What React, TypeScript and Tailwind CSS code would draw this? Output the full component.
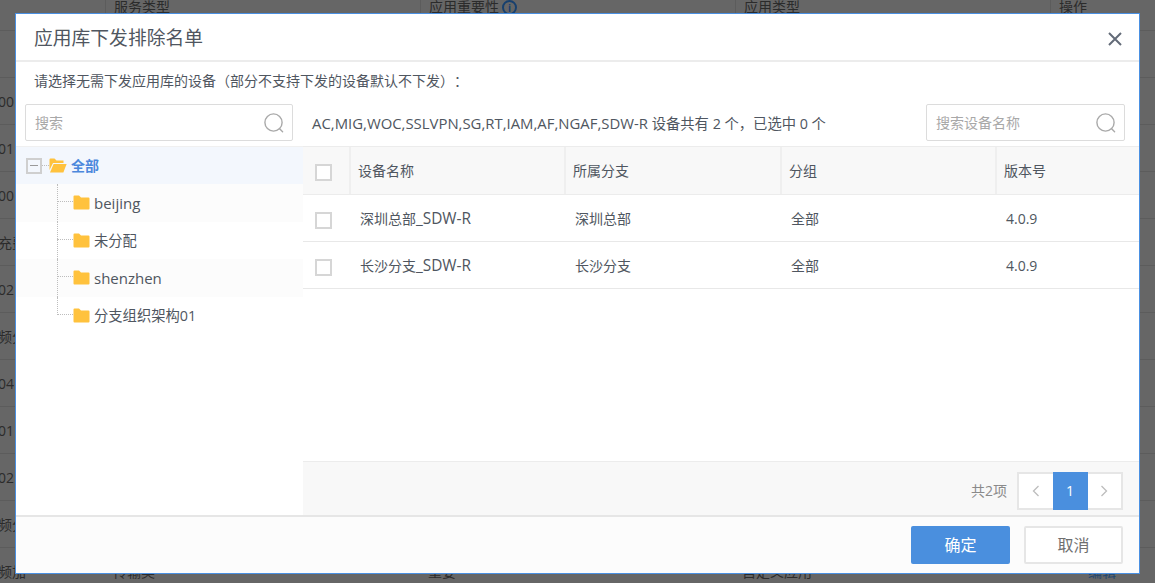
import React from "react";

const FONT = "[font-family:'Open_Sans','Noto_Sans_CJK_SC',sans-serif] [text-spacing-trim:space-all]";

function Search() {
  return (
    <svg width="22" height="22" viewBox="0 0 22 22" fill="none" stroke="#a9a9a9" strokeWidth="1.4" className="shrink-0">
      <circle cx="10.5" cy="10.5" r="8.6" />
      <path d="M16.6 16.8 L19.6 19.8" strokeLinecap="round" />
    </svg>
  );
}

function Folder() {
  return (
    <svg width="17" height="15" viewBox="0 0 17 15" className="shrink-0">
      <path d="M0.5 1.5 Q0.5 0.5 1.5 0.5 H6 L8 2.6 H15.5 Q16.5 2.6 16.5 3.6 V13.5 Q16.5 14.5 15.5 14.5 H1.5 Q0.5 14.5 0.5 13.5 Z" fill="#ffc23d" />
    </svg>
  );
}

function FolderOpen() {
  return (
    <svg width="18" height="15" viewBox="0 0 18 15" className="shrink-0">
      <path d="M0.5 12 V1.5 Q0.5 0.5 1.5 0.5 H5.5 L7.5 2.6 H14.5 V5 H4 Z" fill="#ffc23d" />
      <path d="M4.6 6 H17.6 L14.4 14.5 H1 Z" fill="#ffc23d" />
    </svg>
  );
}

function Box() {
  return <span className="block h-[17px] w-[17px] border-2 border-[#d6d6d6] bg-white" />;
}

function TreeRow({ label, tint, last, latin }: { label: string; tint?: boolean; last?: boolean; latin?: boolean }) {
  return (
    <div className={`relative flex h-[37.5px] items-center pl-[57px] ${tint ? "bg-[#fcfcfc]" : "bg-white"}`}>
      <span className={`absolute left-[41px] top-0 w-0 border-l border-dotted border-[#bdbdbd] ${last ? "h-[18px]" : "h-full"}`} />
      <span className="absolute left-[41px] top-[17px] w-[16px] border-t border-dotted border-[#bdbdbd]" />
      <Folder />
      <span className={`ml-[4px] text-[#4f5660] ${latin ? "text-[15px]" : "text-[14.3px]"}`}>{label}</span>
    </div>
  );
}

const COLS = "grid grid-cols-[48px_215px_216px_215px_1fr]";

function DeviceRow({ name, branch }: { name: string; branch: string }) {
  return (
    <div className={`${COLS} h-[47px] items-center border-b border-[#e8e8e8] text-[14px] text-[#4f5660]`}>
      <div className="mt-[4px] pl-[12px]"><Box /></div>
      <div className="mt-[1px] pl-[9px]">{name}<span className="text-[15.4px]">_SDW-R</span></div>
      <div className="mt-[1px] pl-[9px]">{branch}</div>
      <div className="mt-[1px] pl-[9px]">全部</div>
      <div className="mt-[1px] pl-[9px]">4.0.9</div>
    </div>
  );
}

const BG_ROWS = ["", "00", "01", "00", "充费", "02", "频分", "04", "01", "02", "频分"];

export default function App() {
  return (
    <div className={`relative h-[583px] w-[1155px] overflow-hidden bg-[#666666] ${FONT}`}>
      <div className="text-[14px] text-[#2b2b2b]">
        <div className="grid h-[31px] grid-cols-[105px_315px_315px_315px_1fr] border-b border-[#5c5c5c]">
          {["", "服务类型", "应用重要性", "应用类型", "操作"].map((t, i) => (
            <div key={i} className={`flex h-[14px] items-center whitespace-nowrap pl-[8px] ${i > 0 ? "h-full items-start border-l border-[#5c5c5c]" : ""}`}>
              <span className="leading-[14px]">{t}</span>
              {i === 2 && <span className="ml-[3px] flex h-[15px] w-[15px] items-center justify-center rounded-full border-2 border-[#17406e] text-[10px] font-bold leading-none text-[#17406e]">i</span>}
            </div>
          ))}
        </div>
        {BG_ROWS.map((t, i) => (
          <div key={i} className="flex h-[47px] items-center border-b border-[#5c5c5c]">
            <div className={`flex justify-end overflow-hidden whitespace-nowrap ${/\d/.test(t) ? "w-[14px]" : "w-[26px]"}`}>{t}</div>
          </div>
        ))}
        <div className="grid h-[47px] grid-cols-[113px_315px_314px_315px_1fr] items-center">
          <div className="flex w-[26px] justify-end overflow-hidden whitespace-nowrap">频加</div>
          <div>传输类</div>
          <div>重要</div>
          <div>自定义应用</div>
          <div className="pl-[31px] text-[#23466e]">编辑</div>
        </div>
      </div>

      <div className="absolute left-[15px] top-[13px] flex h-[561px] w-[1125px] flex-col border border-[#4a90e2] bg-white">
        <div className="flex h-[48px] shrink-0 items-center justify-between border-b-2 border-[#ececec] pl-[18px] pr-[17px] pt-[2px]">
          <span className="text-[18.8px] text-[#4f5660]">应用库下发排除名单</span>
          <svg width="14" height="14" viewBox="0 0 14 14" stroke="#636b78" strokeWidth="2" className="mt-[2px]">
            <path d="M1 1 L13 13 M13 1 L1 13" />
          </svg>
        </div>
        <div className="flex h-[36px] shrink-0 items-center pl-[18px] text-[14px] text-[#4f5660]">
          请选择无需下发应用库的设备（部分不支持下发的设备默认不下发）：
        </div>
        <div className="flex min-h-0 flex-1">
          <div className="flex w-[287px] shrink-0 flex-col rounded-t-[4px] bg-white">
            <div className="h-[49px] shrink-0 border-b border-[#f0f0f0] pl-[9px] pt-[6px]">
              <div className="flex h-[37px] w-[268px] items-center justify-between rounded-[2px] border border-[#dcdcdc] pl-[9px] pr-[7px] text-[14px] text-[#a8a8a8]">
                搜索
                <Search />
              </div>
            </div>
            <div className="flex h-[37px] shrink-0 items-center bg-[#f3f7fd] pl-[10px]">
              <span className="flex h-[16px] w-[16px] shrink-0 items-center justify-center border-2 border-[#cfcfcf]">
                <span className="block h-[1.5px] w-[8px] bg-[#9a9a9a]" />
              </span>
              <span className="w-[7px] border-t border-dotted border-[#bdbdbd]" />
              <FolderOpen />
              <span className="ml-[4px] text-[14px] font-bold text-[#4c88dc]">全部</span>
            </div>
            <TreeRow label="beijing" tint latin />
            <TreeRow label="未分配" />
            <TreeRow label="shenzhen" tint latin />
            <TreeRow label="分支组织架构01" last />
          </div>
          <div className="flex min-w-0 flex-1 flex-col">
            <div className="flex h-[48px] shrink-0 items-start justify-between pl-[9px] pr-[14px] pt-[6px]">
              <span className="mt-[8px] text-[14.3px] text-[#4f5660]">
                <span className="text-[14.9px]">AC,MIG,WOC,SSLVPN,SG,RT,IAM,AF,NGAF,SDW-R</span> 设备共有 2 个，已选中 0 个
              </span>
              <div className="flex h-[37px] w-[199px] items-center justify-between rounded-[2px] border border-[#dcdcdc] pl-[9px] pr-[7px] text-[14px] text-[#a8a8a8]">
                搜索设备名称
                <Search />
              </div>
            </div>
            <div className={`${COLS} h-[49px] shrink-0 items-stretch border-y border-[#ececec] bg-[#f8f8f8] text-[14px] text-[#4f5660]`}>
              <div className="flex items-center border-r-2 border-[#efefef] pl-[12px] pt-[4px]"><Box /></div>
              <div className="flex items-center border-r-2 border-[#efefef] pl-[7px]">设备名称</div>
              <div className="flex items-center border-r-2 border-[#efefef] pl-[7px]">所属分支</div>
              <div className="flex items-center border-r-2 border-[#efefef] pl-[7px]">分组</div>
              <div className="flex items-center pl-[7px]">版本号</div>
            </div>
            <DeviceRow name="深圳总部" branch="深圳总部" />
            <DeviceRow name="长沙分支" branch="长沙分支" />
            <div className="flex-1" />
            <div className="flex h-[54px] shrink-0 items-center justify-end border-t border-[#ececec] bg-[#f8f8f8] pr-[16px] pt-[4px]">
              <span className="mr-[10px] text-[14px] text-[#8a8a8a]">共2项</span>
              <div className="flex h-[38px] w-[106px] border-2 border-[#e6e6e6] bg-white">
                <span className="flex flex-1 items-center justify-center">
                  <svg width="8" height="12" viewBox="0 0 8 12" fill="none" stroke="#bdbdbd" strokeWidth="1.3"><path d="M6.5 1 L1.5 6 L6.5 11" /></svg>
                </span>
                <span className="-my-[2px] flex w-[35px] items-center justify-center bg-[#4a8fde] text-[14px] text-white">1</span>
                <span className="flex flex-1 items-center justify-center">
                  <svg width="8" height="12" viewBox="0 0 8 12" fill="none" stroke="#bdbdbd" strokeWidth="1.3"><path d="M1.5 1 L6.5 6 L1.5 11" /></svg>
                </span>
              </div>
            </div>
          </div>
        </div>
        <div className="flex h-[58px] shrink-0 items-center justify-end gap-[14px] border-t-2 border-[#e6e6e6] bg-[#fcfcfc] pr-[16px]">
          <button className="h-[38px] w-[99px] rounded-[2px] bg-[#4a8fde] text-[16px] text-white">确定</button>
          <button className="h-[38px] w-[99px] rounded-[2px] border-2 border-[#e6e6e6] bg-white text-[16px] text-[#6f6f6f]">取消</button>
        </div>
      </div>
    </div>
  );
}
